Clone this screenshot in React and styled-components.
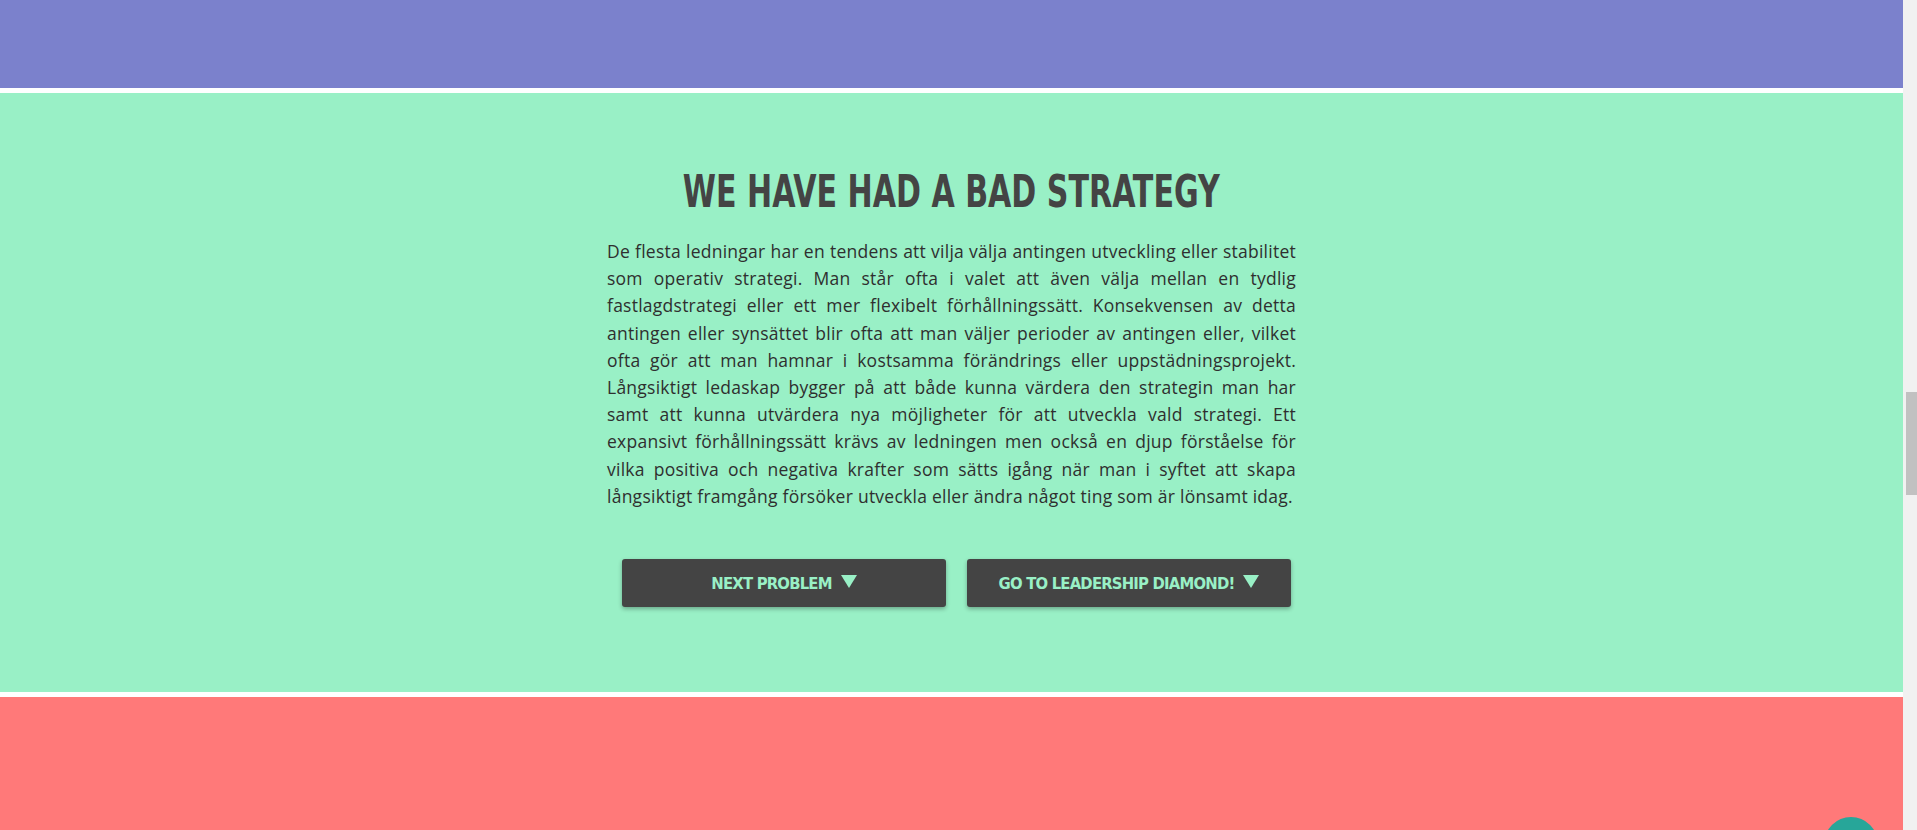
import React from 'react'
import styled, { createGlobalStyle } from 'styled-components'

const GlobalStyle = createGlobalStyle`
  html, body {
    margin: 0;
    padding: 0;
    height: 100%;
    overflow: hidden;
    background: #ffffff;
  }
  #root {
    height: 100%;
  }
`

const paragraph = `De flesta ledningar har en tendens att vilja välja antingen utveckling eller stabilitet som operativ strategi. Man står ofta i valet att även välja mellan en tydlig fastlagdstrategi eller ett mer flexibelt förhållningssätt. Konsekvensen av detta antingen eller synsättet blir ofta att man väljer perioder av antingen eller, vilket ofta gör att man hamnar i kostsamma förändrings eller uppstädningsprojekt. Långsiktigt ledaskap bygger på att både kunna värdera den strategin man har samt att kunna utvärdera nya möjligheter för att utveckla vald strategi. Ett expansivt förhållningssätt krävs av ledningen men också en djup förståelse för vilka positiva och negativa krafter som sätts igång när man i syftet att skapa långsiktigt framgång försöker utveckla eller ändra något ting som är lönsamt idag.`

const App = () => {
  return (
    <Page>
      <GlobalStyle />
      <Main>
        <Section color="#7b81cc" height="88px" />
        <Section color="#99f0c6" height="599px">
          <Content>
            <Heading>WE HAVE HAD A BAD STRATEGY</Heading>
            <Text>{paragraph}</Text>
            <ButtonRow>
              <Button><Label>NEXT PROBLEM</Label><Arrow /></Button>
              <Button><Label>GO TO LEADERSHIP DIAMOND!</Label><Arrow /></Button>
            </ButtonRow>
          </Content>
        </Section>
        <Section color="#ff7979" grow />
      </Main>
      <ScrollTrack>
        <ScrollThumb />
      </ScrollTrack>
      <ChatBubble />
    </Page>
  )
}

export default App

const Page = styled.div`
  height: 100vh;
  width: 100vw;
  display: flex;
  flex-direction: row;
`;

const Main = styled.div`
  flex: 1;
  display: flex;
  flex-direction: column;
  gap: 5px;
  background: #ffffff;
  overflow: hidden;
`;

const Section = styled.section`
  flex: ${props => (props.grow ? '1' : 'none')};
  height: ${props => props.height || 'auto'};
  background: ${props => props.color};
  display: flex;
  justify-content: center;
`;

const Content = styled.div`
  width: 689px;
  padding-top: 75px;
  display: flex;
  flex-direction: column;
  align-items: center;
`;

const Heading = styled.h1`
  margin: 0;
  font-family: "DejaVu Sans Condensed", "DejaVu Sans", sans-serif;
  font-weight: 700;
  font-size: 44px;
  line-height: 48px;
  white-space: nowrap;
  transform: scaleX(0.76);
  color: #444444;
`;

const Text = styled.p`
  margin: 22px 0 0 0;
  width: 100%;
  font-family: "Open Sans", sans-serif;
  font-size: 17.5px;
  letter-spacing: 0.25px;
  line-height: 27.2px;
  text-align: justify;
  color: #2f2f2f;
`;

const ButtonRow = styled.div`
  display: flex;
  gap: 21px;
  margin-top: 49px;
  padding-left: 10px;
`;

const Button = styled.button`
  width: 324px;
  height: 48px;
  border: none;
  border-radius: 3px;
  background: #444444;
  box-shadow: 0 2px 4px rgba(0, 0, 0, 0.3);
  color: #99f0c6;
  display: flex;
  align-items: center;
  justify-content: center;
  gap: 9px;
  cursor: pointer;
`;

const Label = styled.span`
  font-family: "DejaVu Sans Condensed", "DejaVu Sans", sans-serif;
  font-weight: 700;
  font-size: 16.5px;
  letter-spacing: -0.8px;
  white-space: nowrap;
`;

const Arrow = styled.span`
  width: 0;
  height: 0;
  border-left: 8px solid transparent;
  border-right: 8px solid transparent;
  border-top: 13px solid #99f0c6;
  margin-bottom: 3px;
`;

const ScrollTrack = styled.div`
  width: 14px;
  height: 100%;
  background: #f1f1f1;
  display: flex;
  flex-direction: column;
  align-items: center;
  padding-top: 392px;
  box-sizing: border-box;
`;

const ScrollThumb = styled.div`
  width: 11px;
  height: 103px;
  margin-left: 3px;
  background: #c1c1c1;
`;

const ChatBubble = styled.div`
  position: fixed;
  left: 1824px;
  top: 817px;
  width: 54px;
  height: 54px;
  border-radius: 50%;
  background: #27a699;
`;
